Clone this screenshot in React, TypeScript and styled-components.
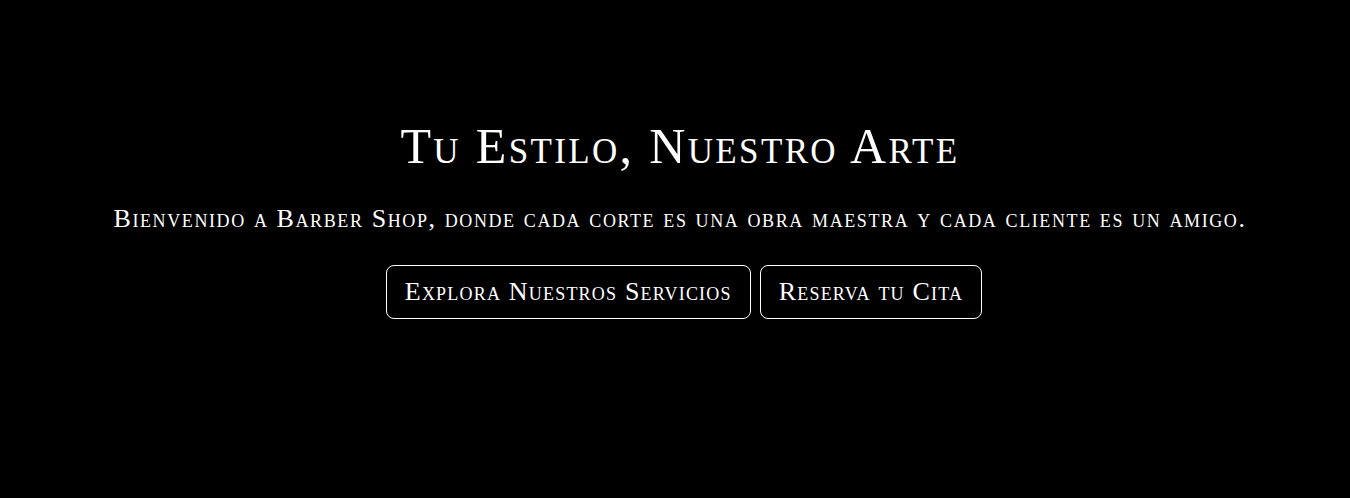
import styled, { createGlobalStyle } from 'styled-components'

const GlobalStyle = createGlobalStyle`
  html, body {
    margin: 0;
    padding: 0;
    background: #000;
  }

  body {
    font-family: "Liberation Serif", "DejaVu Serif", serif;
    color: #fff;
  }
`

const Hero = styled.section`
  display: flex;
  flex-direction: column;
  align-items: center;
  height: 498px;
  padding: 120px 0 0 10px;
  box-sizing: border-box;
  text-align: center;
  background: #000;
`

const Title = styled.h1`
  margin: 0 0 33px;
  font-size: 50px;
  font-weight: 400;
  line-height: 52px;
  font-variant: small-caps;
  letter-spacing: 2.35px;
`

const Lead = styled.p`
  margin: 0 0 32px;
  font-size: 26px;
  line-height: 28px;
  font-variant: small-caps;
  letter-spacing: 1.6px;
`

const Actions = styled.div`
  display: flex;
  gap: 9px;
  margin-left: 8px;
`

const Button = styled.a`
  display: flex;
  align-items: center;
  justify-content: center;
  height: 54px;
  padding: 0 18px;
  box-sizing: border-box;
  border: 1px solid #fff;
  border-radius: 8px;
  color: #fff;
  text-decoration: none;
  font-size: 26px;
  font-variant: small-caps;
  letter-spacing: 1.2px;
  cursor: pointer;
`

export default function App() {
  return (
    <>
      <GlobalStyle />
      <Hero>
        <Title>Tu Estilo, Nuestro Arte</Title>
        <Lead>
          Bienvenido a Barber Shop, donde cada corte es una obra maestra y cada cliente es un amigo.
        </Lead>
        <Actions>
          <Button href="#servicios">Explora Nuestros Servicios</Button>
          <Button href="#reserva">Reserva tu Cita</Button>
        </Actions>
      </Hero>
    </>
  )
}
